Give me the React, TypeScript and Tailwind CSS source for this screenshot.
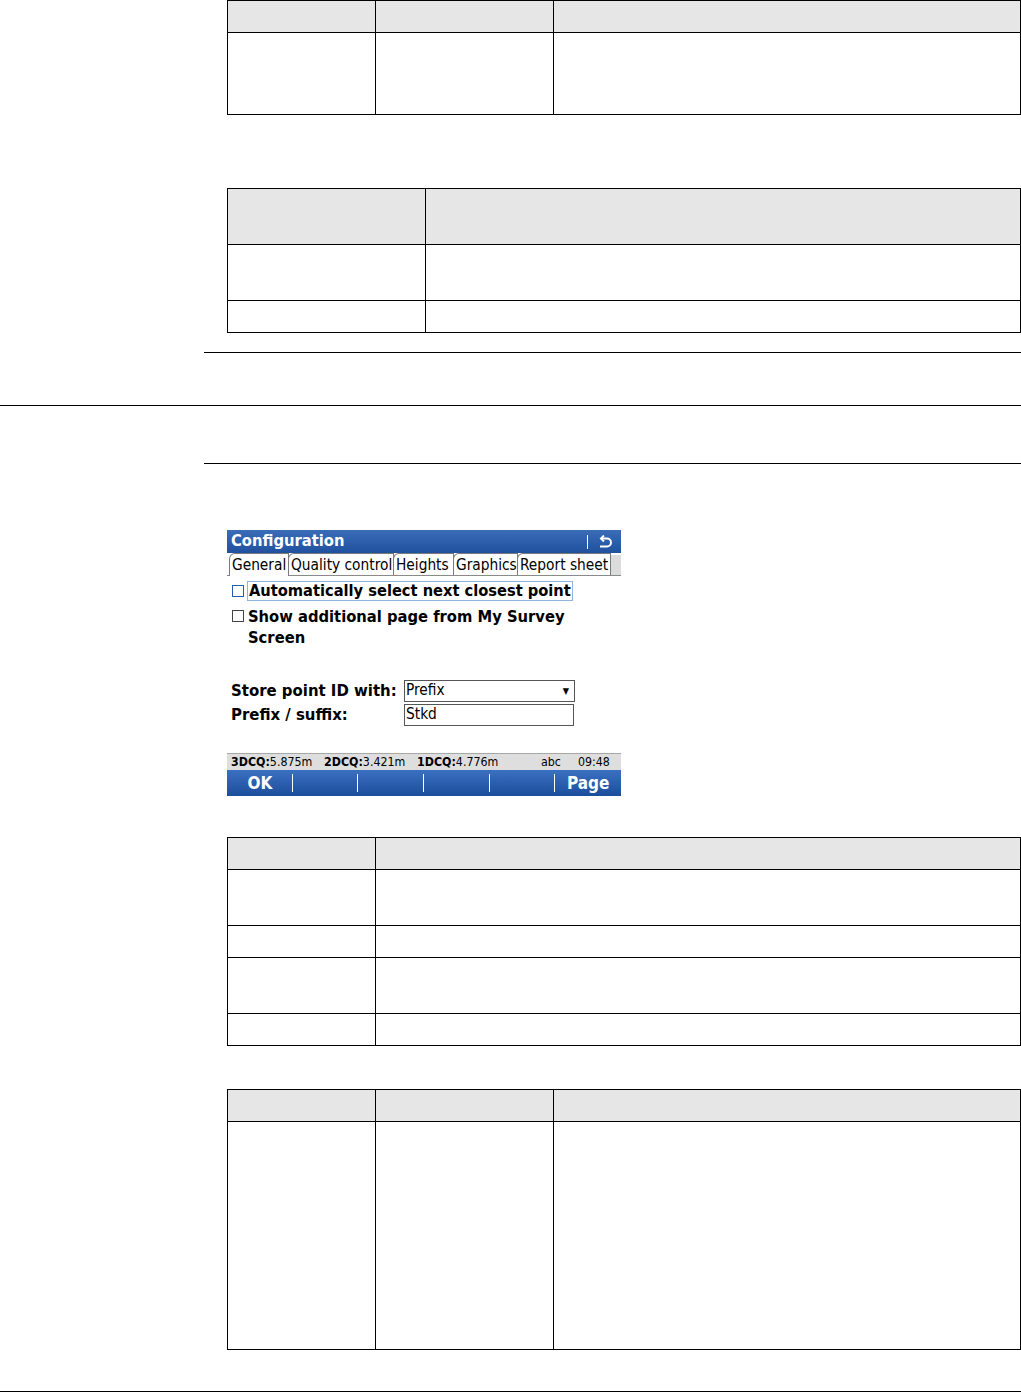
import React from "react";

const F = { fontFamily: '"DejaVu Sans Condensed", "DejaVu Sans", sans-serif' };

function Table3Col({ headerH, bodyH }: { headerH: string; bodyH: string }) {
  return (
    <div className="ml-[227px] w-[794px] border-t border-l border-black">
      <div className="grid grid-cols-[148px_178px_1fr]">
        <div className={`${headerH} bg-[#e6e6e6] border-r border-b border-black`} />
        <div className={`${headerH} bg-[#e6e6e6] border-r border-b border-black`} />
        <div className={`${headerH} bg-[#e6e6e6] border-r border-b border-black`} />
        <div className={`${bodyH} border-r border-b border-black`} />
        <div className={`${bodyH} border-r border-b border-black`} />
        <div className={`${bodyH} border-r border-b border-black`} />
      </div>
    </div>
  );
}

function ReturnIcon() {
  return (
    <svg width="16" height="14" viewBox="0 0 16 14" fill="none" stroke="white" strokeWidth="2">
      <path d="M4 3.5 H10 A4 4 0 0 1 10 11.5 H3" />
      <polyline points="7,0.5 4,3.5 7,6.5" fill="none" />
    </svg>
  );
}

function Device() {
  const tabs: [string, string][] = [
    ["General", "w-[60px]"],
    ["Quality control", "w-[106px]"],
    ["Heights", "w-[61px]"],
    ["Graphics", "w-[65px]"],
    ["Report sheet", "w-[94px]"],
  ];
  return (
    <div className="ml-[227px] w-[394px] h-[266px] flex flex-col bg-white" style={F}>
      {/* title bar */}
      <div className="h-[23px] bg-linear-to-b from-[#3a6cb8] to-[#1f519f] flex items-center pl-[4px] pr-[8px]">
        <span className="text-white font-bold text-[16.4px] leading-none">Configuration</span>
        <div className="flex-1" />
        <div className="w-px h-[14px] bg-white mr-[9px]" />
        <ReturnIcon />
      </div>
      {/* tabs */}
      <div className="h-[23px] flex items-end pl-[2px] bg-white border-b border-[#8a8a8a]">
        {tabs.map(([t, w], i) => (
          <div
            key={t}
            className={`${w} shrink-0 pt-[2px] px-[2px] flex items-center whitespace-nowrap text-[15.3px] leading-none text-black border-t border-l border-r border-[#7a7a7a] rounded-tl-[6px] ${
              i === 0 ? "bg-white -mb-px h-[23px]" : "bg-white h-[22px]"
            } ${i > 0 ? "-ml-px" : ""}`}
          >
            {t}
          </div>
        ))}
        <div className="flex-1 h-[20px] bg-[#dcdcdc]" />
      </div>
      {/* checkboxes */}
      <div className="flex items-start mt-[5px] pl-[5px]">
        <div className="w-[12px] h-[12px] border border-[#1f5fb0] mt-[4px] shrink-0" />
        <div className="ml-[3px] border border-[#8fb4e0] px-[1px] h-[20px] flex items-center">
          <span className="font-bold text-[16.3px] leading-none text-black whitespace-nowrap">Automatically select next closest point</span>
        </div>
      </div>
      <div className="flex items-start mt-[5px] pl-[5px]">
        <div className="w-[12px] h-[12px] border border-[#444] mt-[4px] shrink-0" />
        <div className="ml-[4px] font-bold text-[16.4px] leading-[21px] text-black">
          Show additional page from My Survey
          <br />
          Screen
        </div>
      </div>
      {/* fields */}
      <div className="mt-[32px] pl-[4px] flex items-center h-[22px]">
        <span className="w-[173px] font-bold text-[16.6px] leading-none text-black whitespace-nowrap">Store point ID with:</span>
        <div className="w-[171px] h-[22px] border border-[#555] flex items-center px-[1px]">
          <span className="text-[15.3px] leading-none text-black flex-1">Prefix</span>
          <span className="text-[9px] leading-none text-black mr-[4px]">▼</span>
        </div>
      </div>
      <div className="mt-[2px] pl-[4px] flex items-center h-[22px]">
        <span className="w-[173px] font-bold text-[16.6px] leading-none text-black">Prefix / suffix:</span>
        <div className="w-[170px] h-[22px] border border-[#555] flex items-center px-[1px]">
          <span className="text-[15.3px] leading-none text-black">Stkd</span>
        </div>
      </div>
      <div className="flex-1" />
      {/* status bar */}
      <div className="h-[17px] bg-[#dedede] border-t border-[#a8a8a8] flex items-center pl-[4px] text-[12.3px] leading-none text-black">
        <span className="w-[93px]"><b>3DCQ:</b>5.875m</span>
        <span className="w-[93px]"><b>2DCQ:</b>3.421m</span>
        <span className="w-[124px]"><b>1DCQ:</b>4.776m</span>
        <span className="w-[37px]">abc</span>
        <span>09:48</span>
      </div>
      {/* softkeys */}
      <div className="h-[26px] bg-linear-to-b from-[#3b70c0] to-[#1b4d9c] flex items-center">
        {["OK", "", "", "", "", "Page"].map((k, i) => (
          <div key={i} className="flex-1 h-full flex items-center relative">
            <span className="flex-1 text-center text-white font-bold text-[17px] leading-none">{k}</span>
            {i < 5 && <div className="absolute right-0 top-[4px] w-px h-[18px] bg-white" />}
          </div>
        ))}
      </div>
    </div>
  );
}

export default function App() {
  return (
    <div className="w-[1021px] h-[1392px] bg-white overflow-hidden">
      {/* table 1 */}
      <Table3Col headerH="h-[32px]" bodyH="h-[82px]" />

      {/* table 2 */}
      <div className="mt-[73px] ml-[227px] w-[794px] border-t border-l border-black">
        <div className="grid grid-cols-[198px_1fr]">
          <div className="h-[56px] bg-[#e6e6e6] border-r border-b border-black" />
          <div className="h-[56px] bg-[#e6e6e6] border-r border-b border-black" />
          <div className="h-[56px] border-r border-b border-black" />
          <div className="h-[56px] border-r border-b border-black" />
          <div className="h-[32px] border-r border-b border-black" />
          <div className="h-[32px] border-r border-b border-black" />
        </div>
      </div>

      <div className="mt-[19px] ml-[204px] w-[817px] h-px bg-black" />
      <div className="mt-[52px] w-[1021px] h-px bg-black" />
      <div className="mt-[57px] ml-[204px] w-[817px] h-px bg-black" />

      <div className="mt-[66px]">
        <Device />
      </div>

      {/* table 3 */}
      <div className="mt-[41px] ml-[227px] w-[794px] border-t border-l border-black">
        <div className="grid grid-cols-[148px_1fr]">
          <div className="h-[32px] bg-[#e6e6e6] border-r border-b border-black" />
          <div className="h-[32px] bg-[#e6e6e6] border-r border-b border-black" />
          <div className="h-[56px] border-r border-b border-black" />
          <div className="h-[56px] border-r border-b border-black" />
          <div className="h-[32px] border-r border-b border-black" />
          <div className="h-[32px] border-r border-b border-black" />
          <div className="h-[56px] border-r border-b border-black" />
          <div className="h-[56px] border-r border-b border-black" />
          <div className="h-[32px] border-r border-b border-black" />
          <div className="h-[32px] border-r border-b border-black" />
        </div>
      </div>

      {/* table 4 */}
      <div className="mt-[43px]">
        <Table3Col headerH="h-[32px]" bodyH="h-[228px]" />
      </div>

      <div className="mt-[41px] w-[1021px] h-px bg-black" />
    </div>
  );
}
